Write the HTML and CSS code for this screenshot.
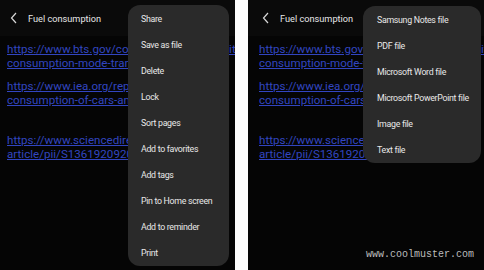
FILE: index.html
```html
<!DOCTYPE html>
<html>
<head>
<meta charset="utf-8">
<link rel="stylesheet" href="styles.css">
</head>
<body>
<div class="shots">
  <div class="phone phone-left">
    <div class="header">
      <svg class="back" width="8" height="12" viewBox="0 0 8 12"><path d="M6 1 L1.5 6 L6 11" fill="none" stroke="#d8d8d8" stroke-width="1.2"/></svg>
      <span class="title">Fuel consumption</span>
    </div>
    <div class="content">
      <p class="link"><span>https://www.bts.gov/content/energy-intensity-</span><span>consumption-mode-transportation</span></p>
      <p class="link link-spaced"><span>https://www.iea.org/reports/fuel-</span><span>consumption-of-cars-and-vans</span></p>
      <p class="link"><span>https://www.sciencedirect.com/science/</span><span>article/pii/S1361920920305</span></p>
    </div>
    <ul class="menu menu-left">
      <li>Share</li>
      <li>Save as file</li>
      <li>Delete</li>
      <li>Lock</li>
      <li>Sort pages</li>
      <li>Add to favorites</li>
      <li>Add tags</li>
      <li>Pin to Home screen</li>
      <li>Add to reminder</li>
      <li>Print</li>
    </ul>
  </div>
  <div class="gap"></div>
  <div class="phone phone-right">
    <div class="header">
      <svg class="back" width="8" height="12" viewBox="0 0 8 12"><path d="M6 1 L1.5 6 L6 11" fill="none" stroke="#d8d8d8" stroke-width="1.2"/></svg>
      <span class="title">Fuel consumption</span>
    </div>
    <div class="content">
      <p class="link"><span>https://www.bts.gov/content/energy-intensity-</span><span>consumption-mode-transportation</span></p>
      <p class="link link-spaced"><span>https://www.iea.org/reports/fuel-</span><span>consumption-of-cars-and-vans</span></p>
      <p class="link"><span>https://www.sciencedirect.com/science/</span><span>article/pii/S1361920920305</span></p>
    </div>
    <ul class="menu menu-right">
      <li>Samsung Notes file</li>
      <li>PDF file</li>
      <li>Microsoft Word file</li>
      <li>Microsoft PowerPoint file</li>
      <li>Image file</li>
      <li>Text file</li>
    </ul>
    <div class="watermark">www.coolmuster.com</div>
  </div>
</div>
</body>
</html>
```
FILE: styles.css
```css
* { box-sizing: border-box; }
html, body { margin: 0; padding: 0; background: #ffffff; }
body { width: 484px; height: 270px; overflow: hidden; font-family: Roboto, "Liberation Sans", sans-serif; }
.shots { display: flex; width: 484px; height: 270px; }
.gap { width: 13px; background: #fdfdfd; flex: none; }
.phone { position: relative; height: 270px; background: #050505; overflow: hidden; flex: none; }
.phone-left { width: 235px; }
.phone-right { width: 236px; }
.header { height: 36px; background: #0a0a0a; display: flex; align-items: center; padding-left: 10px; gap: 10px; }
.phone-right .header { padding-left: 14px; }
.back { flex: none; }
.title { color: #e6e6e6; font-size: 9.2px; }
.content { padding: 6px 0 0 7px; }
.phone-right .content { padding-left: 11px; }
.link { margin: 0 0 9px 0; display: flex; flex-direction: column; white-space: nowrap; color: #3245c0; font-size: 11.6px; line-height: 14px; }
.link-spaced { margin-bottom: 26px; }
.link span { text-decoration: underline; text-underline-offset: 1px; }
.menu { position: absolute; margin: 0; padding: 1px 0 0 0; list-style: none; background: #2a2a2a; border-radius: 12px; }
.menu li { height: 26px; display: flex; align-items: center; padding-left: 13px; color: #e8e8e8; font-size: 8.8px; letter-spacing: -0.3px; }
.menu-left { left: 128px; top: 5px; width: 101px; }
.menu-right { left: 115px; top: 6px; width: 118px; }
.menu-right li { padding-left: 14px; }
.watermark { position: absolute; left: 118px; top: 249px; font-family: "Liberation Mono", monospace; font-size: 10px; color: #bcbcbc; }
```
